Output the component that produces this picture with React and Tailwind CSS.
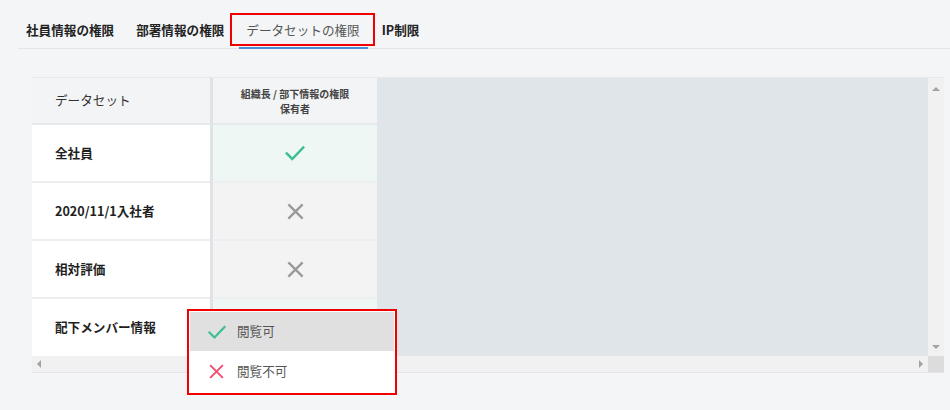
import React from "react";

const tabs = ["社員情報の権限", "部署情報の権限", "データセットの権限", "IP制限"];

const rows = [
  { label: "全社員", ok: true },
  { label: "2020/11/1入社者", ok: false },
  { label: "相対評価", ok: false },
  { label: "配下メンバー情報", ok: true, hidden: true },
];

const Check = ({ className }) => (
  <svg viewBox="0 0 24 24" className={className} fill="none" stroke="currentColor" strokeWidth="2.6" strokeLinecap="square">
    <path d="M3 12.5l6 6L21 6" />
  </svg>
);

const Cross = ({ className, w = 2.6 }) => (
  <svg viewBox="0 0 24 24" className={className} fill="none" stroke="currentColor" strokeWidth={w}>
    <path d="M3 3l18 18M21 3L3 21" />
  </svg>
);

const App = () => {
  return (
    <div
      className="w-[950px] h-[410px] bg-[#f4f5f7] relative overflow-hidden"
      style={{ fontFamily: '"Noto Sans CJK JP", "Noto Sans", sans-serif' }}
    >
      {/* tabs */}
      <div className="pt-[13px] pl-[15px]">
        <div className="flex ml-[3px] border-b border-[#e3e5e8]">
          {tabs.map((t, i) => {
            const active = i === 2;
            return (
              <div
                key={t}
                className={`relative px-[11px] h-[35px] flex items-center text-[12.6px] ${
                  i === 0 ? "-ml-[3px]" : ""
                } ${active ? "text-[#555] font-normal" : "text-[#222] font-bold"}`}
              >
                {t}
                {active && (
                  <>
                    <span className="absolute left-[4px] right-[3px] bottom-[-1px] h-[2px] bg-[#4a8fd6]" />
                    <span className="absolute left-[-5px] right-[-4px] top-0 bottom-[2px] border-2 border-[#f00000]" />
                  </>
                )}
              </div>
            );
          })}
        </div>
      </div>

      {/* table */}
      <div className="ml-[32px] mr-[6px] mt-[28px] border-t border-[#e6e8eb] border-b border-b-[#e2e4e7]">
        <div className="flex">
          <div className="flex bg-[#dfe3e7] gap-[3px]">
            <div className="w-[178px] flex flex-col">
              <div className="h-[47px] bg-[#f3f4f6] border-b-2 border-[#e7eaed] flex items-center pl-[23px] text-[12.6px] text-[#333]">
                データセット
              </div>
              {rows.map((r, i) => (
                <div
                  key={r.label}
                  className={`bg-white flex items-center pl-[23px] text-[12.6px] font-bold text-[#1f1f1f] ${
                    i < rows.length - 1 ? "h-[58px] border-b-2 border-[#eceef0]" : "h-[57px]"
                  }`}
                >
                  {r.label}
                </div>
              ))}
            </div>
            <div className="w-[164px] flex flex-col">
              <div className="h-[47px] bg-[#f3f4f6] border-b-2 border-[#e7eaed] flex flex-col items-center justify-center text-[10px] leading-[15px] font-bold text-[#444]">
                <span>組織長 / 部下情報の権限</span>
                <span>保有者</span>
              </div>
              {rows.map((r, i) => (
                <div
                  key={r.label}
                  className={`flex items-center justify-center ${
                    r.ok ? "bg-[#eef7f3]" : "bg-[#f3f3f3]"
                  } ${i < rows.length - 1 ? "h-[58px] border-b-2 border-[#eceef0]" : "h-[57px]"}`}
                >
                  {!r.hidden &&
                    (r.ok ? (
                      <Check className="w-[22px] h-[22px] text-[#3bbf92]" />
                    ) : (
                      <Cross className="w-[19px] h-[19px] text-[#9a9a9a]" w={3} />
                    ))}
                </div>
              ))}
            </div>
          </div>
          <div className="flex-1 bg-[#e0e5e9]" />
          <div className="w-[16px] bg-[#f1f1f1] flex flex-col items-center justify-between pt-[9px] pb-[7px]">
            <span className="w-0 h-0 border-x-[4px] border-x-transparent border-b-[4px] border-b-[#a3a3a3]" />
            <span className="w-0 h-0 border-x-[4px] border-x-transparent border-t-[4px] border-t-[#a3a3a3]" />
          </div>
        </div>
        <div className="flex h-[16px]">
          <div className="flex-1 bg-[#f1f1f1] flex items-center justify-between px-[5px]">
            <span className="w-0 h-0 border-y-[4px] border-y-transparent border-r-[4px] border-r-[#a3a3a3]" />
            <span className="w-0 h-0 border-y-[4px] border-y-transparent border-l-[4px] border-l-[#a3a3a3]" />
          </div>
          <div className="w-[16px] bg-[#dcdcdc]" />
        </div>
      </div>

      {/* dropdown */}
      <div className="absolute left-[187px] top-[309px] w-[210px] border-2 border-[#f00000] bg-white p-px">
        <div className="h-[39px] bg-[#e0e0e0] flex items-center pl-[17px] gap-[10px] text-[12.6px] text-[#555]">
          <Check className="w-[20px] h-[20px] text-[#3bbf92]" />
          閲覧可
        </div>
        <div className="h-[41px] bg-white flex items-center pl-[18px] gap-[12px] text-[12.6px] text-[#555]">
          <Cross className="w-[17px] h-[17px] text-[#f0506e]" w={2.8} />
          閲覧不可
        </div>
      </div>
    </div>
  );
};

export default App;
